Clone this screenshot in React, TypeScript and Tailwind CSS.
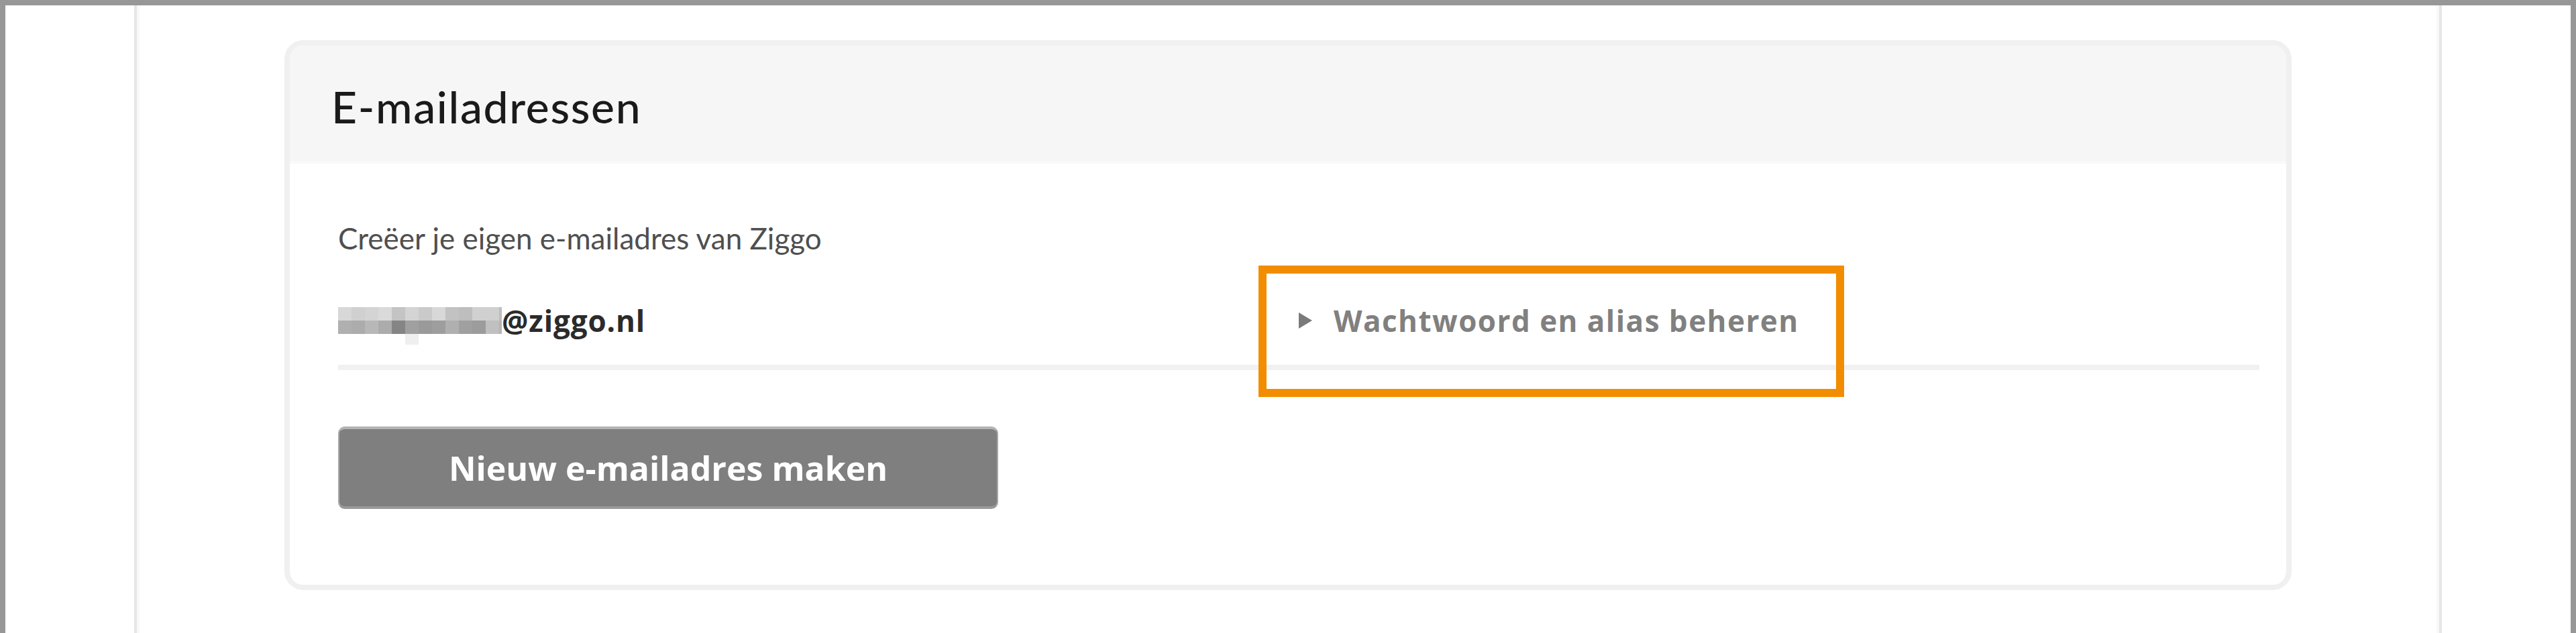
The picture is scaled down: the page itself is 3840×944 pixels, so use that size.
import React from 'react';

const mosaicTop = ['#d8d8d8', '#d0d0d0', '#d4d4d4', '#dadada', '#c4c4c4', '#d4d4d4', '#cacaca', '#d8d8d8', '#c2c2c2', '#bebebe', '#d0d0d0', '#d0d0d0'];
const mosaicBottom = ['#b0b0b0', '#acacac', '#b8b8b8', '#acacac', '#858585', '#a0a0a0', '#9a9a9a', '#9e9e9e', '#b0b0b0', '#a0a0a0', '#9c9c9c', '#c0c0c0'];

// blurred-out local part of the address, drawn as a pixel mosaic
function Mosaic() {
  return (
    <div className="relative flex flex-col shrink-0">
      <div className="flex">
        {mosaicTop.map((c, i) => <div key={i} className="w-[20px] h-[20px]" style={{ backgroundColor: c }} />)}
        <div className="w-[4px] h-[20px] bg-[#bdbdbd]" />
      </div>
      <div className="flex">
        {mosaicBottom.map((c, i) => <div key={i} className="w-[20px] h-[20px]" style={{ backgroundColor: c }} />)}
        <div className="w-[4px] h-[20px] bg-[#b5b5b5]" />
      </div>
      <div className="absolute left-[100px] top-[40px] w-[20px] h-[16px] bg-[#efefef]" />
    </div>
  );
}

export default function App() {
  return (
    <div className="h-[944px] w-full overflow-hidden bg-[#979797] px-2 pt-2 font-[Lato,sans-serif]">
      <div className="h-full bg-white pl-[192px] pr-[192px]">
        <div className="h-full border-x-4 border-[#e6e6e6]">
          <div className="h-full border-x-4 border-[#f8f8f8] px-[216px] pt-[52px]">
            <div className="rounded-[28px] border-8 border-[#f0f0f0] overflow-hidden bg-white">
              <div className="h-[176px] bg-[#f6f6f6] pl-[62px] pt-[58px] border-b-4 border-[#f9f9f9]">
                <h2 className="text-[66px] leading-none font-medium tracking-[0.025em] text-[#1a1a1a]">E-mailadressen</h2>
              </div>
              <div className="pl-[72px] pr-[40px] pt-[89px] pb-[113px]">
                <p className="text-[44px] leading-none text-[#4f4f4f]">Creëer je eigen e-mailadres van Ziggo</p>
                <div className="mt-[79px] grid grid-cols-2 items-start pb-[44px] border-b-8 border-[#f1f1f1]">
                  <div className="flex items-center h-[44px]">
                    <Mosaic />
                    <span className="font-['Open_Sans',sans-serif] text-[44px] leading-none font-bold tracking-[0.02em] text-[#2b2b2b]">@ziggo.nl</span>
                  </div>
                  <div className="relative flex items-center h-[44px]">
                    <svg width="20" height="24" viewBox="0 0 20 24" className="shrink-0">
                      <path d="M0 0 L20 12 L0 24 Z" fill="#7a7a7a" />
                    </svg>
                    <span className="ml-[32px] font-['Open_Sans',sans-serif] text-[44px] leading-none font-bold tracking-[0.033em] text-[#808080]">Wachtwoord en alias beheren</span>
                    <div className="absolute left-[-60px] top-[-60px] w-[873px] h-[196px] border-[12px] border-[#f28c00]" />
                  </div>
                </div>
                <button className="mt-[84px] w-[984px] h-[123px] rounded-[10px] bg-[#7f7f7f] border-t-4 border-[#b4b4b4] border-x-2 border-x-[#a8a8a8] border-b-4 border-b-[#9a9a9a] text-white font-['Open_Sans',sans-serif] text-[50px] font-bold leading-none">
                  Nieuw e-mailadres maken
                </button>
              </div>
            </div>
          </div>
        </div>
      </div>
    </div>
  );
}
